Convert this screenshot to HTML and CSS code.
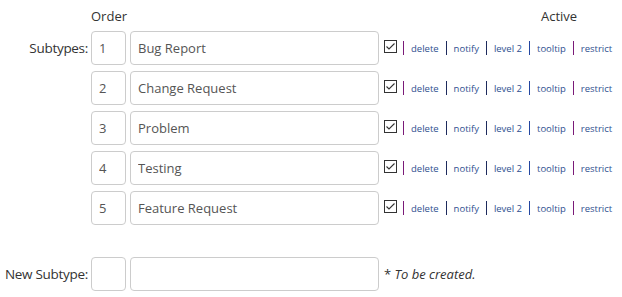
FILE: index.html
```html
<!DOCTYPE html>
<html lang="en">
<head>
  <meta charset="UTF-8">
  <meta name="viewport" content="width=device-width, initial-scale=1.0">
  <title>Subtypes</title>
  <link rel="stylesheet" href="styles.css">
</head>
<body>
  <div class="subtypes">
    <div class="row head">
      <span class="label"></span>
      <span class="order-head">Order</span>
      <span class="name-head"></span>
      <span class="active-head">Active</span>
    </div>

    <div class="row">
      <label class="label" for="name-1">Subtypes:</label>
      <input class="order" type="text" value="1">
      <input class="name" id="name-1" type="text" value="Bug Report">
      <span class="extras">
        <span class="check"><svg width="13" height="13" viewBox="0 0 13 13"><path d="M2.5 6.5 L5 9 L10.5 3.5" fill="none" stroke="#333" stroke-width="1.1"/></svg></span>
        <span class="sep first"></span><a href="#">delete</a>
        <span class="sep"></span><a href="#">notify</a>
        <span class="sep"></span><a href="#">level 2</a>
        <span class="sep blue"></span><a href="#">tooltip</a>
        <span class="sep last"></span><a href="#">restrict</a>
      </span>
    </div>

    <div class="row">
      <span class="label"></span>
      <input class="order" type="text" value="2">
      <input class="name" type="text" value="Change Request">
      <span class="extras">
        <span class="check"><svg width="13" height="13" viewBox="0 0 13 13"><path d="M2.5 6.5 L5 9 L10.5 3.5" fill="none" stroke="#333" stroke-width="1.1"/></svg></span>
        <span class="sep first"></span><a href="#">delete</a>
        <span class="sep"></span><a href="#">notify</a>
        <span class="sep"></span><a href="#">level 2</a>
        <span class="sep blue"></span><a href="#">tooltip</a>
        <span class="sep last"></span><a href="#">restrict</a>
      </span>
    </div>

    <div class="row">
      <span class="label"></span>
      <input class="order" type="text" value="3">
      <input class="name" type="text" value="Problem">
      <span class="extras">
        <span class="check"><svg width="13" height="13" viewBox="0 0 13 13"><path d="M2.5 6.5 L5 9 L10.5 3.5" fill="none" stroke="#333" stroke-width="1.1"/></svg></span>
        <span class="sep first"></span><a href="#">delete</a>
        <span class="sep"></span><a href="#">notify</a>
        <span class="sep"></span><a href="#">level 2</a>
        <span class="sep blue"></span><a href="#">tooltip</a>
        <span class="sep last"></span><a href="#">restrict</a>
      </span>
    </div>

    <div class="row">
      <span class="label"></span>
      <input class="order" type="text" value="4">
      <input class="name" type="text" value="Testing">
      <span class="extras">
        <span class="check"><svg width="13" height="13" viewBox="0 0 13 13"><path d="M2.5 6.5 L5 9 L10.5 3.5" fill="none" stroke="#333" stroke-width="1.1"/></svg></span>
        <span class="sep first"></span><a href="#">delete</a>
        <span class="sep"></span><a href="#">notify</a>
        <span class="sep"></span><a href="#">level 2</a>
        <span class="sep blue"></span><a href="#">tooltip</a>
        <span class="sep last"></span><a href="#">restrict</a>
      </span>
    </div>

    <div class="row">
      <span class="label"></span>
      <input class="order" type="text" value="5">
      <input class="name" type="text" value="Feature Request">
      <span class="extras">
        <span class="check"><svg width="13" height="13" viewBox="0 0 13 13"><path d="M2.5 6.5 L5 9 L10.5 3.5" fill="none" stroke="#333" stroke-width="1.1"/></svg></span>
        <span class="sep first"></span><a href="#">delete</a>
        <span class="sep"></span><a href="#">notify</a>
        <span class="sep"></span><a href="#">level 2</a>
        <span class="sep blue"></span><a href="#">tooltip</a>
        <span class="sep last"></span><a href="#">restrict</a>
      </span>
    </div>

    <div class="row new">
      <label class="label" for="new-name">New Subtype:</label>
      <input class="order" type="text" value="">
      <input class="name" id="new-name" type="text" value="">
      <span class="note">* <em>To be created.</em></span>
    </div>
  </div>
</body>
</html>
```

FILE: styles.css
```css
body {
  margin: 0;
  font-family: "Open Sans", Arial, sans-serif;
  font-size: 13px;
  color: #333;
  background: #fff;
}
.subtypes {
  padding-top: 6px;
  display: flex;
  flex-direction: column;
  gap: 6px;
}
.row {
  display: flex;
  align-items: center;
  height: 34px;
  white-space: nowrap;
}
.row > * {
  flex-shrink: 0;
}
.row.head {
  height: 20px;
  margin-bottom: -1px;
}
.row.new {
  margin-top: 26px;
}
.label {
  width: 88px;
  margin-right: 3px;
  text-align: right;
  font-size: 13.5px;
  letter-spacing: -0.3px;
}
.order-head {
  width: 35px;
  margin-right: 4px;
  text-align: center;
}
.name-head {
  width: 249px;
}
.active-head {
  margin-left: 162px;
}
input {
  box-sizing: border-box;
  height: 34px;
  padding: 0 7px;
  border: 1px solid #ccc;
  border-radius: 4px;
  font-family: inherit;
  font-size: 13px;
  color: #555;
  background: #fff;
  outline: none;
}
.order {
  width: 35px;
  margin-right: 4px;
}
.name {
  width: 249px;
}
.extras {
  display: flex;
  align-items: center;
  margin-left: 5px;
  font-size: 9.5px;
}
.check {
  width: 13px;
  height: 13px;
  box-sizing: border-box;
  border: 1px solid #333;
  display: flex;
  margin-top: -3px;
}
.check svg {
  margin: -1px;
}
.sep {
  height: 14px;
  margin: 0 7px 0 7px;
  border-left: 1px solid #1d2a5c;
}
.sep.first {
  margin-left: 6px;
  border-color: #7a1a78;
}
.sep.blue {
  border-color: #2346a0;
}
.sep.last {
  border-color: #7a1a78;
}
a {
  color: #2f4f8f;
  text-decoration: none;
}
a:hover {
  text-decoration: underline;
}
.note {
  margin-left: 5px;
  font-size: 13px;
}
```
